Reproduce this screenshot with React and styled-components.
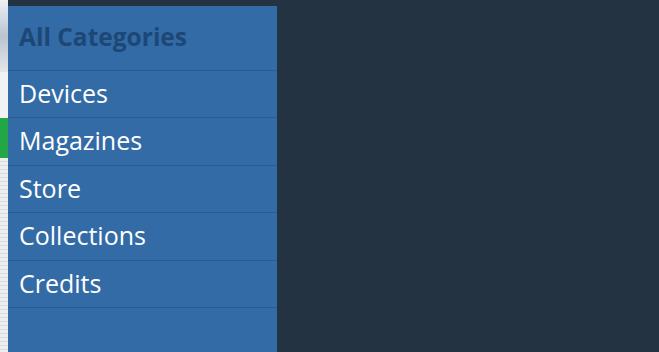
import styled, { createGlobalStyle } from 'styled-components'

const GlobalStyle = createGlobalStyle`
    html, body {
        margin: 0;
        padding: 0;
        height: 100%;
        background: #243342;
    }
    #root {
        height: 100%;
    }
`

const Page = styled.div`
    display: flex;
    height: 352px;
    overflow: hidden;
    background: #243342;
    font-family: "Open Sans", "Noto Sans", sans-serif;
`

// strip of some page peeking from behind the menu
const BackStrip = styled.div`
    width: 8px;
    flex: none;
    display: flex;
    flex-direction: column;
    background: linear-gradient(to right, #e9ecef, #c9ced3);

    .pic {
        height: 72px;
        background: linear-gradient(#eef0f2, #b9c4d2 50%, #e4e6e8);
    }

    .white {
        height: 46px;
        background: #f1f2f3;
    }

    .green {
        height: 40px;
        background: #22a646;
    }

    .rest {
        flex: 1;
        background: repeating-linear-gradient(#eceef0 0 3px, #d8dbde 3px 4px);
    }
`

const Menu = styled.nav`
    width: 269px;
    flex: none;
    margin-top: 6px;
    background: #336ba7;
    display: flex;
    flex-direction: column;
`

const Heading = styled.h2`
    margin: 0;
    height: 65px;
    box-sizing: border-box;
    padding: 14px 0 0 11px;
    font-size: 24.5px;
    font-weight: 700;
    color: #1d4775;
    border-bottom: 1px solid #2a5c91;
`

const Item = styled.a`
    display: block;
    height: 47.4px;
    box-sizing: border-box;
    padding: 5px 0 0 11px;
    font-size: 25px;
    color: #ffffff;
    text-decoration: none;
    border-bottom: 1px solid #2a5c91;
`

const items = ['Devices', 'Magazines', 'Store', 'Collections', 'Credits']

function App() {
    return (
        <Page>
            <GlobalStyle />
            <BackStrip>
                <div className="pic" />
                <div className="white" />
                <div className="green" />
                <div className="rest" />
            </BackStrip>
            <Menu>
                <Heading>All Categories</Heading>
                {items.map(name => (
                    <Item key={name} href="#">{name}</Item>
                ))}
            </Menu>
        </Page>
    )
}

export default App
